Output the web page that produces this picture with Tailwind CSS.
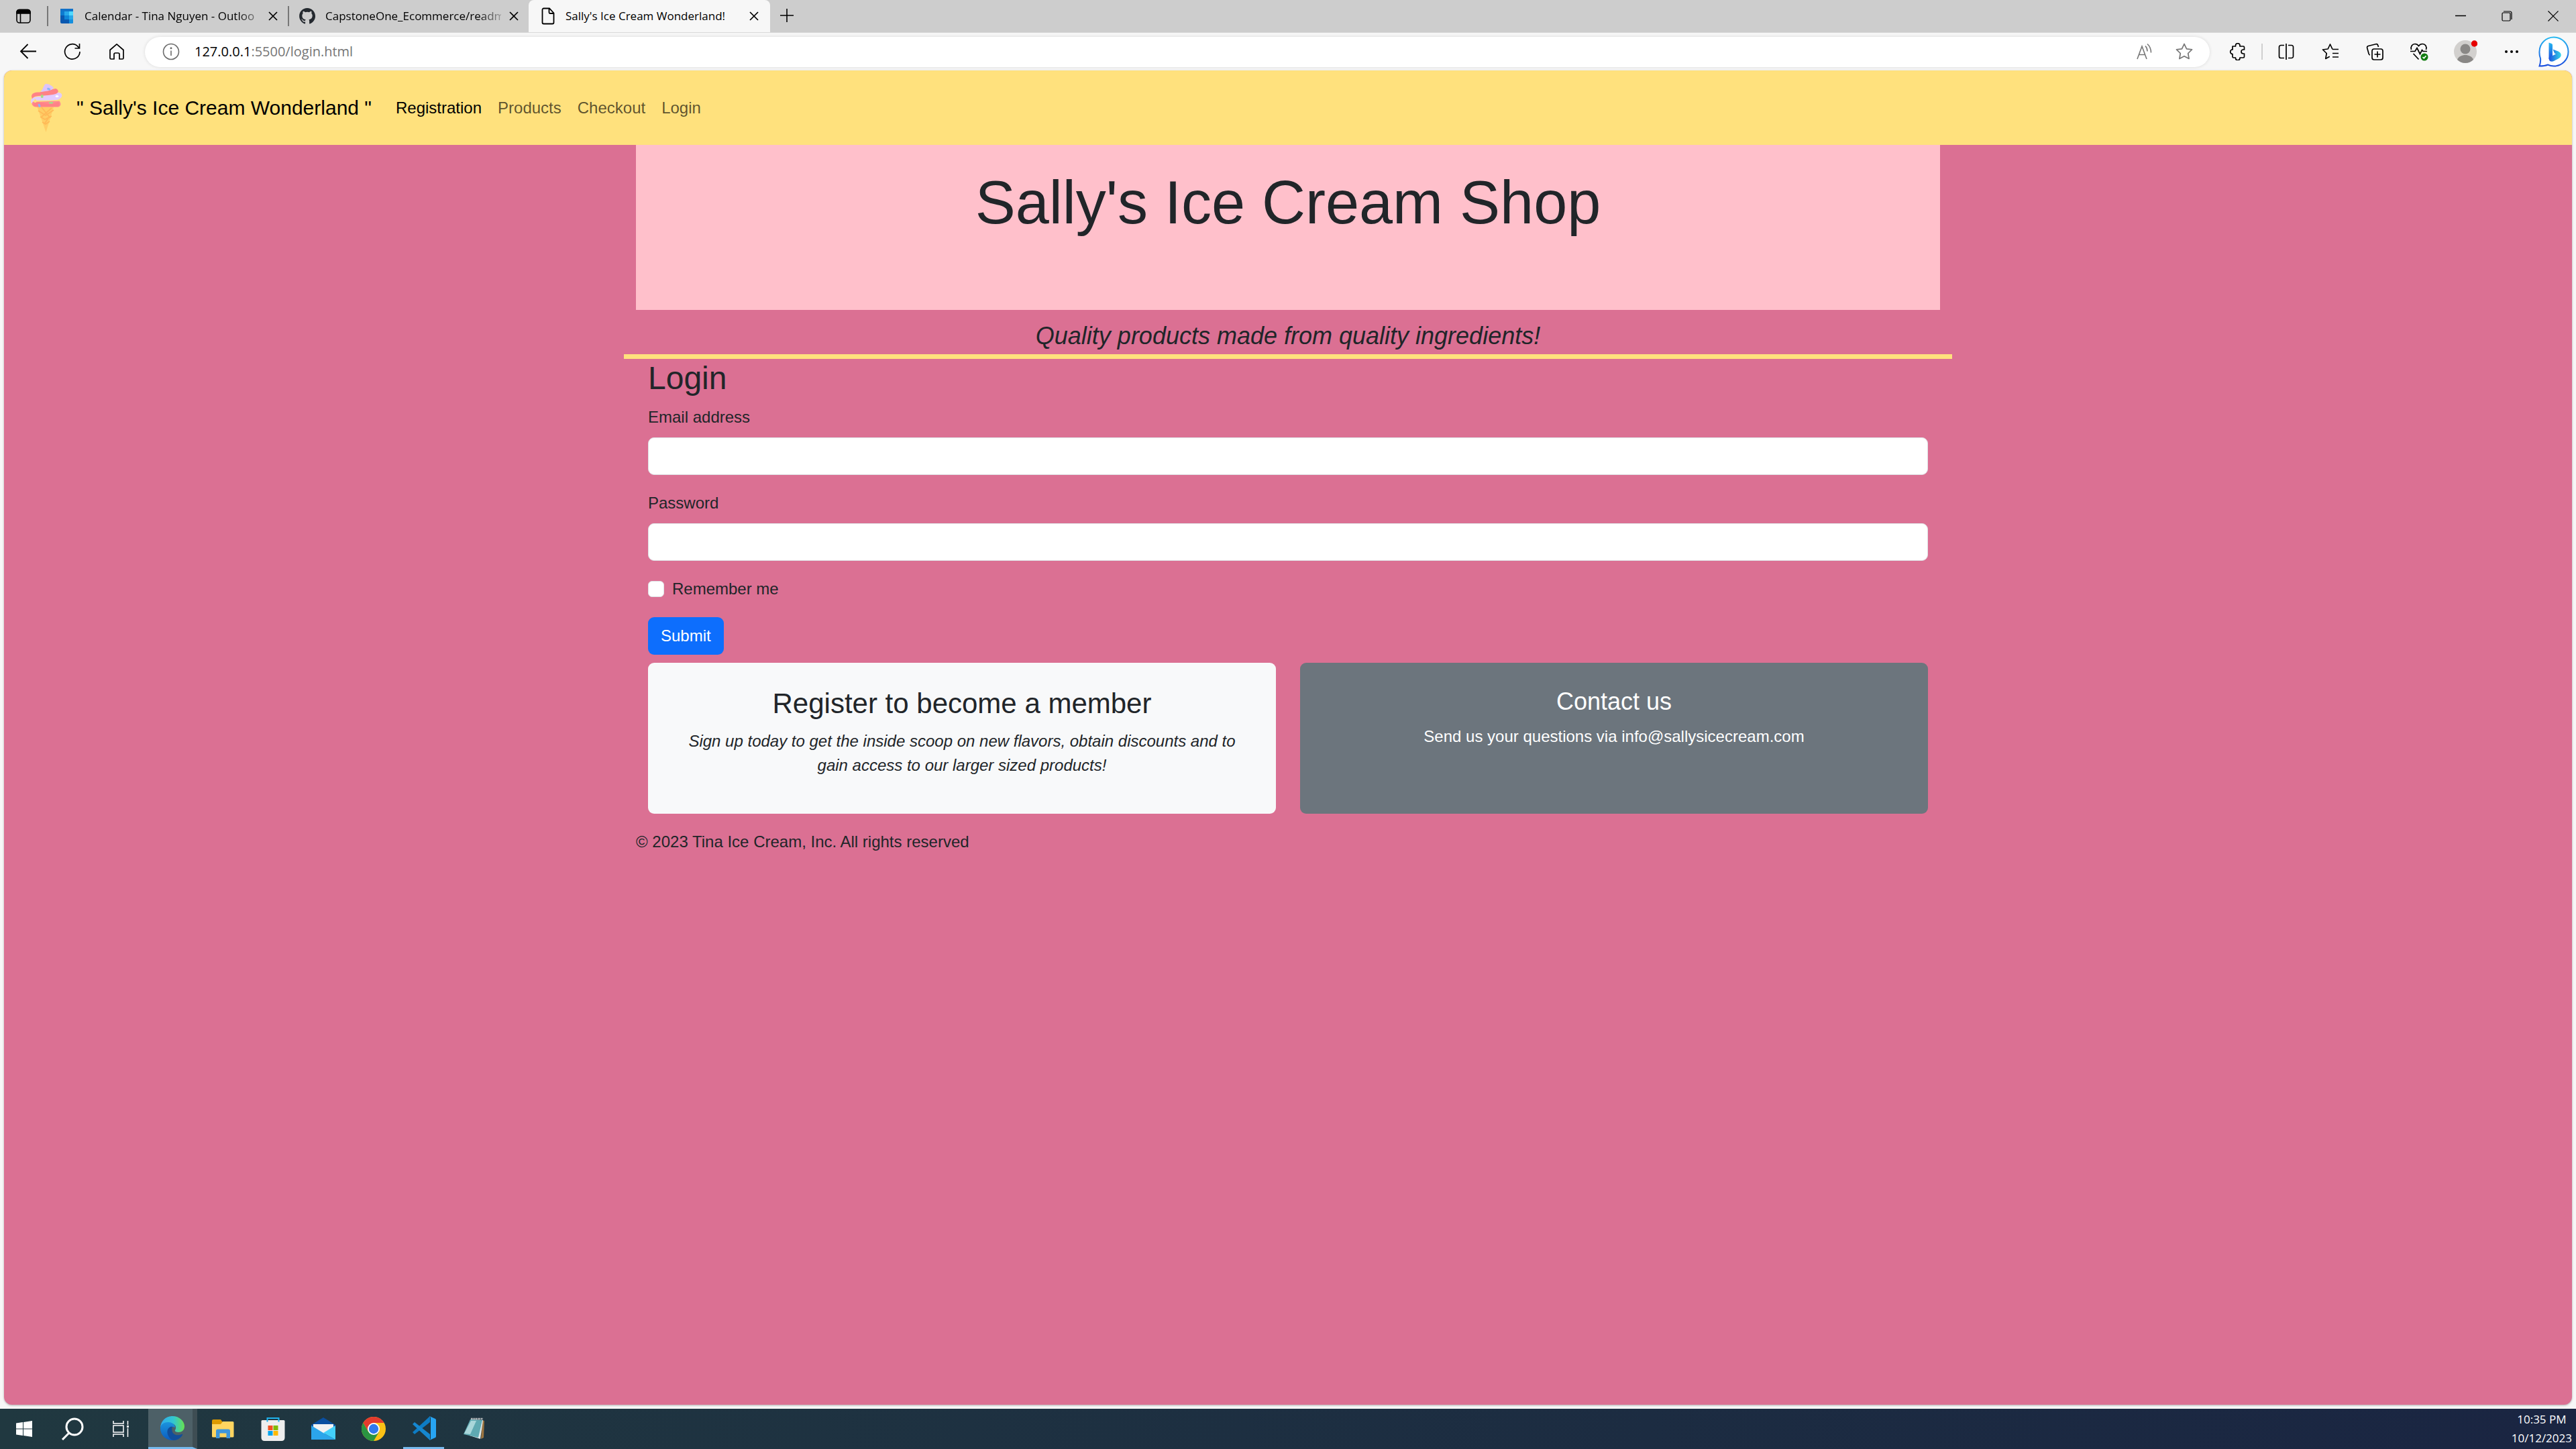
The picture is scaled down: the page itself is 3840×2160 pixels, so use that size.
<!DOCTYPE html>
<html lang="en">
<head>
<meta charset="utf-8">
<title>Sally's Ice Cream Wonderland!</title>
<script src="https://cdn.jsdelivr.net/npm/@tailwindcss/browser@4"></script>
</head>
<body class="flex min-h-screen flex-col bg-[#f7f7f7] font-['Liberation_Sans',Arial,sans-serif] text-[#212529]">

<!-- Tab strip -->
<header class="font-['Open_Sans','Noto_Sans',sans-serif] text-black">
  <div class="flex h-12 items-center bg-[#cdcdcd] text-[17px]">
    <button aria-label="Tab actions" class="flex w-[70px] justify-center">
      <svg class="size-6" viewBox="0 0 24 24" fill="none" stroke="#000" stroke-width="1.6"><rect x="2" y="2.500" width="20" height="19.500" rx="4"/><path d="M2 8V6a3.500 3.500 0 0 1 3.500-3.500h13A3.500 3.500 0 0 1 22 6v2z" fill="#000"/><path d="M7.500 8v14"/></svg>
    </button>
    <div class="flex h-full w-[359px] items-center pl-4">
      <div class="-ml-4 mr-[14px] h-[30px] w-[2px] bg-[#777]"></div>
      <svg class="size-[26px] shrink-0" viewBox="0 0 26 26"><rect x="4" y="2" width="19" height="22" rx="2" fill="#0a58b0"/><path d="M4 4a2 2 0 0 1 2-2h4v8H4z" fill="#0f6cbd"/><path d="M4 2h19v5H4z" fill="#1272c8"/><path d="M10 6h7v6h-7zM17 12h6v6h-6z" fill="#28a8ea"/><path d="M17 6h6v6h-6z" fill="#50d9ff"/><path d="M10 12h7v6h-7z" fill="#0f86d8"/><path d="M4 6h6v6H4z" fill="#0d7bd0"/><path d="M17 18h6v4a2 2 0 0 1-2 2h-4z" fill="#1490df"/></svg>
      <a href="#" class="ml-[14px] w-[262px] overflow-hidden whitespace-nowrap [mask-image:linear-gradient(to_right,#000_228px,transparent_272px)]">Calendar - Tina Nguyen - Outloo</a>
      <button aria-label="Close tab" class="ml-[6px]"><svg class="size-[26px]" viewBox="0 0 26 26" fill="none" stroke="#000" stroke-width="1.700"><path d="M7 7l12 12M19 7L7 19"/></svg></button>
    </div>
    <div class="flex h-full w-[359px] items-center pl-4">
      <div class="-ml-4 mr-[14px] h-[30px] w-[2px] bg-[#777]"></div>
      <svg class="size-[26px] shrink-0" viewBox="0 0 16 16" fill="#24292f"><path d="M8 .6C3.900.6.700 3.900.700 8c0 3.300 2.100 6 5 7 .4.100.5-.2.500-.4v-1.300c-2 .4-2.500-.9-2.500-.9-.3-.9-.8-1.100-.8-1.100-.7-.5 0-.5 0-.5.700.1 1.100.8 1.100.8.700 1.100 1.700.8 2.100.6.100-.5.300-.8.500-1-1.600-.2-3.300-.8-3.300-3.600 0-.8.300-1.500.8-2-.1-.2-.4-1 .1-2 0 0 .6-.2 2 .8a7 7 0 0 1 3.600 0c1.400-1 2-.8 2-.8.400 1 .1 1.800.1 2 .5.500.8 1.200.8 2 0 2.800-1.700 3.400-3.300 3.600.3.200.5.700.5 1.400v2c0 .2.100.5.500.4 2.900-1 5-3.700 5-7C15.300 3.900 12.100.6 8 .6z"/></svg>
      <a href="#" class="ml-[14px] w-[262px] overflow-hidden whitespace-nowrap [mask-image:linear-gradient(to_right,#000_228px,transparent_272px)]">CapstoneOne_Ecommerce/readm</a>
      <button aria-label="Close tab" class="ml-[6px]"><svg class="size-[26px]" viewBox="0 0 26 26" fill="none" stroke="#000" stroke-width="1.700"><path d="M7 7l12 12M19 7L7 19"/></svg></button>
    </div>
    <div class="flex h-full w-[360px] items-center rounded-t-[8px] bg-[#f7f7f7] pl-4">
      <svg class="size-[26px] shrink-0" viewBox="0 0 26 26" fill="none" stroke="#000" stroke-width="1.800"><path d="M15 1.500H6.500a2 2 0 0 0-2 2v19a2 2 0 0 0 2 2h13a2 2 0 0 0 2-2V8.500zM14.500 1.500v6a1.500 1.500 0 0 0 1.500 1.500h5.500"/></svg>
      <a href="#" class="ml-[13px] w-[262px] overflow-hidden whitespace-nowrap">Sally's Ice Cream Wonderland!</a>
      <button aria-label="Close tab" class="ml-[6px]"><svg class="size-[26px]" viewBox="0 0 26 26" fill="none" stroke="#000" stroke-width="1.700"><path d="M7 7l12 12M19 7L7 19"/></svg></button>
    </div>
    <button aria-label="New tab" class="ml-3"><svg class="size-[26px]" viewBox="0 0 26 26" fill="none" stroke="#000" stroke-width="1.600"><path d="M13 3v20M3 13h20" transform="translate(0 -1)"/></svg></button>
    <div class="ml-auto flex text-black">
      <button aria-label="Minimize" class="flex w-[69px] justify-center"><svg class="size-4" viewBox="0 0 16 16" stroke="#000" stroke-width="1.500"><path d="M0 7.500h16"/></svg></button>
      <button aria-label="Restore" class="flex w-[69px] justify-center"><svg class="size-4" viewBox="0 0 16 16" fill="none" stroke="#000" stroke-width="1.200"><rect x="1" y="3" width="12" height="12" rx="1.500"/><path d="M3 1h9.500A2.500 2.500 0 0 1 15 3.500V13"/></svg></button>
      <button aria-label="Close" class="flex w-[69px] justify-center"><svg class="size-4" viewBox="0 0 16 16" stroke="#000" stroke-width="1.200"><path d="M.5.5l15 15M15.500.5l-15 15"/></svg></button>
    </div>
  </div>

  <!-- Toolbar -->
  <div class="flex h-[57px] items-center border-t border-[#d8d8d8] bg-[#f7f7f7] pl-[9px] pr-[9px]">
    <button aria-label="Back" class="flex w-[66px] justify-center"><svg class="size-[26px]" viewBox="0 0 26 26" fill="none" stroke="#000" stroke-width="1.800"><path d="M25 12.500H2M12.500 2L2 12.500 12.500 23"/></svg></button>
    <button aria-label="Refresh" class="flex w-[66px] justify-center"><svg class="size-[26px]" viewBox="0 0 26 26" fill="none" stroke="#000" stroke-width="1.700"><path d="M24 13A11.200 11.200 0 1 1 21 5.300L23.500 8M23.500 1v7h-7"/></svg></button>
    <button aria-label="Home" class="flex w-[66px] justify-center"><svg class="size-[26px]" viewBox="0 0 26 26" fill="none" stroke="#000" stroke-width="1.700" stroke-linejoin="round"><path d="M3 10.500L13 1.800l10 8.700V22.500a1.500 1.500 0 0 1-1.500 1.500H17v-7a2 2 0 0 0-2-2h-4a2 2 0 0 0-2 2v7H4.500A1.500 1.500 0 0 1 3 22.500z"/></svg></button>
    <div class="ml-[9px] flex h-[45px] grow items-center rounded-full bg-white pl-[26px] pr-2 shadow-[0_0_5px_rgba(0,0,0,0.12)]">
      <svg class="size-[26px] shrink-0" viewBox="0 0 26 26" fill="none" stroke="#6b6b6b" stroke-width="1.600"><circle cx="13" cy="13" r="11.500"/><path d="M13 11.500V19"/><circle cx="13" cy="7.800" r=".7" fill="#6b6b6b"/></svg>
      <div class="ml-[22px] grow text-[20px] leading-[30px] text-[#757575]"><span class="text-black">127.0.0.1</span>:5500/login.html</div>
      <button aria-label="Read aloud" class="flex w-[60px] justify-center"><svg class="size-[26px]" viewBox="0 0 26 26" fill="none" stroke="#767676" stroke-width="1.600"><path d="M3 24L10 5l7 19M5.500 17.500h9M15 4.500q3 3 3 8M18 1.500q5.500 5 5.500 13"/></svg></button>
      <button aria-label="Add to favorites" class="flex w-[60px] justify-center"><svg class="size-[26px]" viewBox="0 0 26 26" fill="none" stroke="#767676" stroke-width="1.700" stroke-linejoin="round"><path d="M13 1.500l3.500 7.300 8 1.100-5.800 5.600 1.400 8L13 19.700l-7.100 3.800 1.400-8L1.500 9.900l8-1.100z"/></svg></button>
    </div>
    <div class="flex items-center pl-[9px]">
      <button aria-label="Extensions" class="flex w-[66px] justify-center"><svg class="size-[26px]" viewBox="0 0 26 26" fill="none" stroke="#000" stroke-width="1.700" stroke-linejoin="round"><path d="M5 5h4.500V4a3 3 0 0 1 6.500 0v1h5a1.500 1.500 0 0 1 1.500 1.500V10h-1.500a3 3 0 0 0 0 6h1.500v4.500A1.500 1.500 0 0 1 21 22h-5v.5a3 3 0 0 1-6.500 0V22H6.500A1.500 1.500 0 0 1 5 20.500V16.500a3.300 3.300 0 0 1 0-6.600z"/></svg></button>
      <div class="mx-[2px] h-6 w-[2px] bg-[#cfcfcf]"></div>
      <button aria-label="Split screen" class="flex w-[66px] justify-center"><svg class="size-[26px]" viewBox="0 0 26 26" fill="none" stroke="#000" stroke-width="1.700"><path d="M10 3.500H5A2.500 2.500 0 0 0 2.500 6v14A2.500 2.500 0 0 0 5 22.500h5M16 3.500h5A2.500 2.500 0 0 1 23.500 6v14a2.500 2.500 0 0 1-2.500 2.500h-5M13 1v24"/></svg></button>
      <button aria-label="Favorites" class="flex w-[66px] justify-center"><svg class="size-[26px]" viewBox="0 0 26 26" fill="none" stroke="#000" stroke-width="1.700" stroke-linejoin="round"><path d="M16 9.500L12.500 2 9.200 9 1.500 10l5.700 5.500-1.400 8 6-3.200M16 9.500h9M16 15.500h9M16 21h9"/></svg></button>
      <button aria-label="Collections" class="flex w-[66px] justify-center"><svg class="size-[26px]" viewBox="0 0 26 26" fill="none" stroke="#000" stroke-width="1.700"><rect x="9" y="9" width="16" height="16" rx="3"/><path d="M17 12.500v9M12.500 17h9M18.500 6l-.8-2.500a2.500 2.500 0 0 0-3-1.700L3.500 4.500a2.500 2.500 0 0 0-1.800 3l2.500 9A2.500 2.500 0 0 0 6 18"/></svg></button>
      <button aria-label="Browser essentials" class="flex w-[66px] justify-center"><svg class="size-[28px]" viewBox="0 0 28 28" fill="none" stroke="#000" stroke-width="1.700"><path d="M2.500 11C1 6.500 4 2.500 8 2.500c2.500 0 4.500 1.500 5.500 3 1-1.500 3-3 5.500-3 4.500 0 7 4 5.500 8.500M1 13.500h7l3-5 4.500 9 3-6 1.500 2h6M5.500 17l8 8.500"/><circle cx="22" cy="22" r="5.500" fill="#107c10" stroke="none"/><path d="M19.500 22l1.800 1.800 3.200-3.600" stroke="#fff"/></svg></button>
      <button aria-label="Profile" class="ml-[3px] flex w-[66px] justify-center"><svg class="size-[36px]" viewBox="0 0 36 36"><circle cx="18" cy="18" r="17" fill="#d2d0ce"/><circle cx="18" cy="14" r="7.500" fill="#8a8886"/><path d="M6 30c2-5 7-7 12-7s10 2 12 7a17 17 0 0 1-24 0z" fill="#8a8886"/><circle cx="31.500" cy="6" r="4.700" fill="#e60000"/></svg></button>
      <button aria-label="Settings and more" class="ml-[3px] flex w-[66px] justify-center"><svg class="size-[26px]" viewBox="0 0 26 26"><circle cx="5" cy="13" r="2" /><circle cx="13" cy="13" r="2"/><circle cx="21" cy="13" r="2"/></svg></button>
      <button aria-label="Bing chat" class="ml-[6px]"><svg class="size-12" viewBox="0 0 48 48"><defs><linearGradient id="bg" x1="0" y1="0" x2="0" y2="1"><stop offset="0" stop-color="#26b8f0"/><stop offset="1" stop-color="#1b4fdf"/></linearGradient><linearGradient id="bg2" x1="0" y1="0" x2="1" y2="0"><stop offset="0" stop-color="#1b50e0"/><stop offset="1" stop-color="#35d6e6"/></linearGradient></defs><path d="M24 2.500c12 0 21.500 9.500 21.500 21.500S36 45.500 24 45.500c-3.500 0-6.500-.8-9-2-3.500 1.500-8 2-12.500 2 1.500-4.500 2-7.500 1.500-11.500a24 24 0 0 1-1.500-10C2.500 12 12 2.500 24 2.500z" fill="#fff" stroke="url(#bg)" stroke-width="2"/><path d="M16.500 10.500l4 1.500q1.500.5 1.500 2v17l-5.500 4z" fill="url(#bg)"/><path d="M16.500 33l5.500-3 5-2.500-2-1-2.500-6 8 3c6 3 5 8 1 10.500l-7.500 4q-3 1.500-6 0-1.500-1.500-1.500-5z" fill="url(#bg2)"/></svg></button>
    </div>
  </div>
</header>

<!-- Web page -->
<main class="mx-[6px] mb-[6px] grow overflow-hidden rounded-[12px] bg-[#db7093] text-[24px] leading-[36px] shadow-[0_1px_3px_rgba(0,0,0,0.3)]">
  <nav class="flex h-[111px] items-center bg-[#ffe17d] pl-9">
    <a href="#" class="flex items-center text-[30px] leading-[45px] text-black">
      <svg class="h-[72px] w-[54px]" viewBox="0 0 54 72"><path d="M13 33l13.500 39L38.500 33z" fill="#ffcd66"/><path d="M15 40l11 7 12-8M18 49l7 4 10-5M21 57l5 3 6-4M20 35l13 16M35 36L19 50M32 48l-8 12" stroke="#ffb957" stroke-width="1.800" fill="none"/><path d="M6 27q-1.500 3 1 5.500c2 2 4 2 6 2h32c4-1.500 4.500-5 1.500-9z" fill="#ff8b90"/><path d="M4 26c0-5 5-7 13-7l28-6c8 0 7 10-3 11-12 1.500-25 0-33 1-3 .5-2.500 3-3 4-2-.5-2-2-2-3z" fill="#e2ccff"/><path d="M5 19c0-5 4-6.500 12-6.500L41 7c5 2 5 6 0 8-10 3-20 2-29 3.500-3 .5-5 2-6 4z" fill="#ff8287"/><path d="M18 12C23 8 23 0 27 0c4 0 9 3 11 6-1 3-8 5-20 6z" fill="#dcc4fa"/><path d="M8 29q7-3 17 0t20-2q3 5-1 7H13c-5 0-6-3-5-5z" fill="#ff8287"/><rect x="28" y="6" width="5" height="3" rx="1" transform="rotate(25 30 8)" fill="#8bb4f5"/><rect x="19" y="16" width="3.500" height="5" rx="1.500" fill="#a6dd88"/><rect x="31" y="27" width="6" height="2.500" rx="1" fill="#a6dd88"/><rect x="9" y="23" width="3" height="5" rx="1" fill="#ffe17d"/><rect x="15" y="30" width="3" height="5" rx="1" transform="rotate(-20 16 32)" fill="#8bb4f5"/><ellipse cx="43" cy="18.500" rx="2.500" ry="1.500" fill="#fff"/></svg>
      <span class="ml-[18px]">" Sally's Ice Cream Wonderland "</span>
    </a>
    <div class="ml-6 flex text-black/65">
      <a href="#" class="px-3 text-black">Registration</a>
      <a href="#" class="px-3">Products</a>
      <a href="#" class="px-3">Checkout</a>
      <a href="#" class="px-3">Login</a>
    </div>
  </nav>

  <div class="mx-auto max-w-[1980px]">
    <div class="mx-[18px] bg-[#ffc0cb] pt-8 pb-[106px] text-center">
      <h1 class="text-[90px] leading-[108px]">Sally's Ice Cream Shop</h1>
    </div>
    <p class="border-b-[7px] border-[#ffe17d] pt-[17px] pb-[6px] text-center text-[36px] leading-[43px] italic">Quality products made from quality ingredients!</p>

    <form class="px-9">
      <h2 class="mb-3 text-[48px] leading-[57px]">Login</h2>
      <label for="email" class="mb-3 block">Email address</label>
      <input id="email" type="email" class="mb-6 block h-14 w-full rounded-[9px] border border-[#dee2e6] bg-white px-[18px]">
      <label for="password" class="mb-3 block">Password</label>
      <input id="password" type="password" class="mb-6 block h-14 w-full rounded-[9px] border border-[#dee2e6] bg-white px-[18px]">
      <div class="mb-6 flex items-center gap-3">
        <input id="remember" type="checkbox" class="size-6 appearance-none rounded-[6px] border border-[#dee2e6] bg-white">
        <label for="remember">Remember me</label>
      </div>
      <button type="submit" class="block h-14 rounded-[9px] bg-[#0d6efd] px-[19px] text-white">Submit</button>
    </form>

    <div class="mt-3 grid grid-cols-2 gap-9 px-9 text-center">
      <section class="rounded-[9px] bg-[#f8f9fa] px-9 pt-9 pb-[54px]">
        <h3 class="mb-[13px] text-[42px] leading-[50px]">Register to become a member</h3>
        <p class="italic">Sign up today to get the inside scoop on new flavors, obtain discounts and to gain access to our larger sized products!</p>
      </section>
      <section class="rounded-[9px] bg-[#6c757d] px-9 pt-9 text-white">
        <h4 class="mb-[13px] text-[36px] leading-[43px]">Contact us</h4>
        <p>Send us your questions via info@sallysicecream.com</p>
      </section>
    </div>
    <footer class="mt-6 px-[18px]">© 2023 Tina Ice Cream, Inc. All rights reserved</footer>
  </div>
</main>

<!-- Taskbar -->
<div class="flex h-[60px] items-center bg-linear-to-r from-[#203840] to-[#1a2542] font-['Open_Sans','Noto_Sans',sans-serif] text-white">
  <button aria-label="Start" class="flex w-[72px] justify-center"><svg class="size-6" viewBox="0 0 24 24" fill="#fff"><path d="M0 3.400l10-1.400v9.500H0zM11 1.900L24 0v11.500H11zM0 12.500h10V22L0 20.600zM11 12.500h13V24l-13-1.900z"/></svg></button>
  <button aria-label="Search" class="flex w-[72px] justify-center"><svg class="size-[34px]" viewBox="0 0 34 34" fill="none" stroke="#fff" stroke-width="3"><circle cx="20" cy="14" r="12"/><path d="M12 23L2 33"/></svg></button>
  <button aria-label="Task view" class="mr-[5px] flex w-[72px] justify-center"><svg class="size-6" viewBox="0 0 24 24" fill="none" stroke="#fff" stroke-width="1.500"><path d="M1 0v4h15V0M1 24v-4h15v4M1 7h15v10H1zM22.500 0v6M22.500 11v13"/><path d="M21 7h3v3h-3z" fill="#fff" stroke="none"/></svg></button>
  <button aria-label="Microsoft Edge" class="flex h-full w-[73px] items-center border-r-[7px] border-b-[3px] border-r-[#3e4d53] border-b-[#76b9ed] bg-[#4d6067] pl-[18px]"><svg class="size-9" viewBox="0 0 36 36"><defs><linearGradient id="e1"><stop offset="0" stop-color="#2fa9ee"/><stop offset=".55" stop-color="#33c7cf"/><stop offset="1" stop-color="#67e34f"/></linearGradient><linearGradient id="e2" x1="0" y1="0" x2="0" y2="1"><stop offset="0" stop-color="#1b93dc"/><stop offset="1" stop-color="#0b5cc0"/></linearGradient></defs><path d="M0 17C1 7 8 0 18 0c11 0 18 8 18 15 0 6-4 9-9 9-4 0-6-1.500-5-3 4-7-3-11-10-11C6 10 2 13 0 17z" fill="url(#e1)"/><path d="M0 18c0-5 5-9 11-9 7 0 11 3.500 11 8l-3-1c-4 0-8 6-4 12 3 5 9 6 14 4-3 3-7 4-11 4C8 36 0 28 0 18z" fill="url(#e2)"/><path d="M18 15.500c-6 0-9 6-7 12 2 5 5 8.500 9 8.500 6 0 11-4 13-8 .5-1-.5-1.500-1-1-9 4-17-1-14-11.500z" fill="#124e9b"/></svg></button>
  <button aria-label="File Explorer" class="flex w-[75px] justify-center"><svg class="size-9" viewBox="0 0 36 36"><path d="M2 6q0-2 2-2h11l3 4H34v10H2z" fill="#dd9a00"/><path d="M2 11h13l3-4h15q1.500 0 1.500 1.500V29q0 1.500-1.500 1.500H3.500Q2 30.500 2 29z" fill="#ffd560"/><path d="M8 32V21q0-2.500 2.500-2.500h16Q29 18.500 29 21v11h-5.500v-7.500h-10V32z" fill="#3d96dc"/></svg></button>
  <button aria-label="Microsoft Store" class="flex w-[75px] justify-center"><svg class="size-9" viewBox="0 0 36 36"><path d="M.5 6.500Q.5 5 2 5h32q1.500 0 1.500 1.500V31q0 5-5 5h-25q-5 0-5-5z" fill="#eee"/><path d="M10.500 13h7v7h-7z" fill="#f25022"/><path d="M18.500 13h7v7h-7z" fill="#7fba00"/><path d="M10.500 21h7v7h-7z" fill="#00a4ef"/><path d="M18.500 21h7v7h-7z" fill="#ffb900"/><path d="M9.500 7.500V2h17v5.500" fill="none" stroke="#1fb3ee" stroke-width="2"/></svg></button>
  <button aria-label="Mail" class="flex w-[75px] justify-center"><svg class="size-9" viewBox="0 0 36 36"><path d="M0 12L18 1l18 11v5H0z" fill="#0a4fa0"/><path d="M3 11h30v8L18 26 3 19z" fill="#f2f2f2"/><path d="M0 13l18 11 18 10H0z" fill="#2ba5ea"/><path d="M36 13L18 24l18 10z" fill="#43d0fb"/></svg></button>
  <button aria-label="Google Chrome" class="flex w-[75px] justify-center"><svg class="size-9" viewBox="0 0 36 36"><circle cx="18" cy="18" r="18" fill="#fbc116"/><path d="M2.400 9a18 18 0 0 1 31.200 0H18L10 22z" fill="#e33b2e"/><path d="M2.400 9a18 18 0 0 0 15.600 27l8-13.500-15.800 0z" fill="#2a9441"/><circle cx="18" cy="18" r="9" fill="#fff"/><circle cx="18" cy="18" r="7.200" fill="#3079ee"/></svg></button>
  <div class="flex h-full w-[75px] justify-center"><button aria-label="Visual Studio Code" class="flex h-full w-[61px] items-center justify-center border-b-[3px] border-[#76b9ed]"><svg class="size-9" viewBox="0 0 36 36"><path d="M1 24l3 3L27 9V0z" fill="#0d7cc4"/><path d="M1 12l3-3 23 18v9z" fill="#1587d0"/><path d="M26 0l9 4q1 .5 1 2v24q0 1.500-1 2l-9 4q2-1 2-3V3q0-2-2-3z" fill="#27a4f2"/></svg></button></div>
  <button aria-label="Notepad" class="flex w-[75px] justify-center"><svg class="size-9" viewBox="0 0 36 36"><path d="M30 5l3 1-1 25-4 2z" fill="#9b7440"/><path d="M13 4l18 1-4 28-16-5z" fill="#dfe9ea"/><path d="M12 4l18 1-6 26L2 26z" fill="#5fa9b2"/><path d="M13 6l8 0-9 20-9-1z" fill="#a9d6da"/><path d="M13 3h18" stroke="#ddd" stroke-width="2.500" stroke-dasharray="1.500 1"/></svg></button>
  <div class="ml-auto pr-[6px] text-center text-[17px] leading-[28px]"><div>10:35 PM</div><div>10/12/2023</div></div>
</div>
</body>
</html>
